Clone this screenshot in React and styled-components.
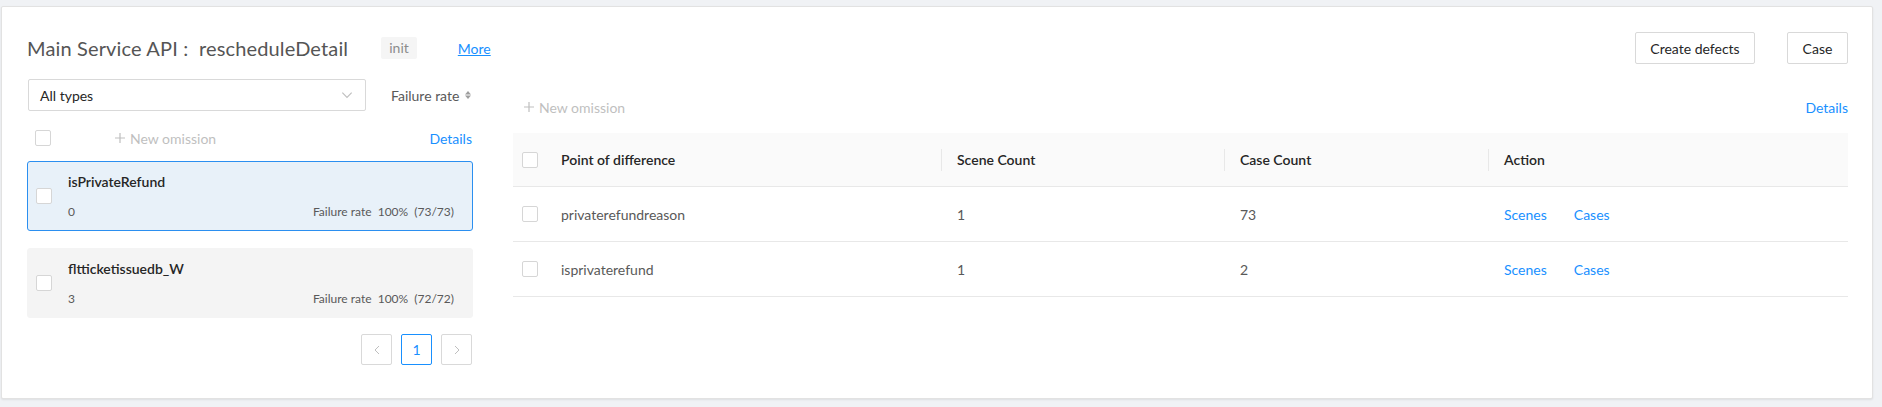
import React from 'react';
import styled, { createGlobalStyle } from 'styled-components';

const GlobalStyle = createGlobalStyle`
  html, body {
    margin: 0;
    padding: 0;
    background: #f0f2f5;
  }
  body {
    font-family: Lato, "Noto Sans", "Noto Sans CJK SC", sans-serif;
    font-size: 14px;
    color: #262626;
  }
`;

const Page = styled.div`
  padding: 6px 9px 8px 1px;
`;

const Card = styled.div`
  box-sizing: border-box;
  height: 393px;
  background: #fff;
  border: 1px solid #e2e2e2;
  border-radius: 2px;
  box-shadow: 0 1px 2px rgba(0, 0, 0, 0.08);
  padding: 25px 24px 0 25px;
`;

const Header = styled.div`
  display: flex;
  align-items: center;
  justify-content: space-between;
  height: 32px;
`;

const TitleGroup = styled.div`
  display: flex;
  align-items: center;
`;

const Title = styled.h1`
  margin: 0;
  font-size: 20px;
  letter-spacing: 0.15px;
  font-weight: 400;
  color: #555;
  white-space: pre;
`;

const Tag = styled.span`
  margin-left: 33px;
  padding: 0 8px;
  height: 22px;
  line-height: 22px;
  background: #f5f5f5;
  border-radius: 2px;
  color: #8c8c8c;
  font-size: 14px;
`;

const MoreLink = styled.a`
  margin-left: 41px;
  color: #1890ff;
  text-decoration: underline;
  font-size: 14px;
  cursor: pointer;
`;

const ButtonGroup = styled.div`
  display: flex;
  gap: 32px;
`;

const Button = styled.button`
  box-sizing: border-box;
  height: 32px;
  width: ${p => p.$width}px;
  background: #fff;
  border: 1px solid #d9d9d9;
  border-radius: 2px;
  font-family: inherit;
  font-size: 14px;
  color: #262626;
  cursor: pointer;
`;

const Body = styled.div`
  display: flex;
  gap: 40px;
  margin-top: 15px;
`;

const LeftCol = styled.div`
  width: 446px;
  flex-shrink: 0;
`;

const FilterRow = styled.div`
  display: flex;
  align-items: center;
  height: 32px;
`;

const Select = styled.div`
  box-sizing: border-box;
  width: 338px;
  height: 32px;
  margin-left: 1px;
  display: flex;
  align-items: center;
  justify-content: space-between;
  padding: 0 11px;
  border: 1px solid #d9d9d9;
  border-radius: 2px;
  color: #262626;
`;

const SortLabel = styled.div`
  margin-left: 25px;
  display: flex;
  align-items: center;
  gap: 5px;
  color: #595959;
`;

const ActionRow = styled.div`
  display: flex;
  align-items: center;
  height: 22px;
  margin-top: 16px;
  padding-left: 8px;
  padding-right: 1px;
`;

const Checkbox = styled.span`
  box-sizing: border-box;
  display: inline-block;
  flex-shrink: 0;
  width: 16px;
  height: 16px;
  background: #fff;
  border: 1px solid #d6d6d6;
  border-radius: 2px;
`;

const AddLink = styled.span`
  margin-left: ${p => p.$offset}px;
  display: flex;
  align-items: center;
  gap: 4px;
  color: #bfbfbf;
`;

const LinkText = styled.a`
  color: #1890ff;
  cursor: pointer;
  margin-left: ${p => (p.$push ? 'auto' : '0')};
  margin-right: ${p => p.$gap || 0}px;
`;

const ItemList = styled.div`
  display: flex;
  flex-direction: column;
  gap: 17px;
  margin-top: 12px;
`;

const Item = styled.div`
  box-sizing: border-box;
  height: 70px;
  display: flex;
  align-items: center;
  padding: 0 18px 0 8px;
  border: 1px solid ${p => (p.$active ? '#2b8ff0' : '#f4f4f4')};
  border-radius: 3px;
  background: ${p => (p.$active ? '#e8f1f9' : '#f4f4f4')};
`;

const ItemBody = styled.div`
  flex: 1;
  margin-left: 16px;
  display: flex;
  flex-direction: column;
  padding-top: 2px;
`;

const ItemTitle = styled.div`
  font-size: 14px;
  line-height: 20px;
  font-weight: 600;
  color: #262626;
`;

const ItemMeta = styled.div`
  display: flex;
  justify-content: space-between;
  margin-top: 10px;
  font-size: 12px;
  line-height: 20px;
  color: #595959;
  white-space: pre;
`;

const Pager = styled.div`
  display: flex;
  justify-content: flex-end;
  gap: 9px;
  margin-top: 16px;
  padding-right: 1px;
`;

const PageBtn = styled.span`
  box-sizing: border-box;
  width: 31px;
  height: 31px;
  display: flex;
  align-items: center;
  justify-content: center;
  border: 1px solid ${p => (p.$active ? '#1890ff' : '#d9d9d9')};
  border-radius: 2px;
  color: ${p => (p.$active ? '#1890ff' : '#bfbfbf')};
  font-size: 14px;
`;

const RightCol = styled.div`
  flex: 1;
  padding-top: 17px;
`;

const Toolbar = styled.div`
  display: flex;
  align-items: center;
  height: 22px;
`;

const Table = styled.div`
  margin-top: 15px;
`;

const Row = styled.div`
  display: grid;
  grid-template-columns: 428px 283px 264px 1fr;
  height: ${p => (p.$head ? 54 : 55)}px;
  background: ${p => (p.$head ? '#fafafa' : '#fff')};
  border-bottom: 1px solid #e8e8e8;
  box-sizing: border-box;
  color: ${p => (p.$head ? '#262626' : '#595959')};
  font-weight: ${p => (p.$head ? 600 : 400)};
`;

const Cell = styled.div`
  position: relative;
  display: flex;
  align-items: center;
  padding-left: ${p => p.$pad ?? 16}px;

  ${p =>
    p.$divider &&
    `
    &::before {
      content: '';
      position: absolute;
      left: 0;
      top: 50%;
      width: 1px;
      height: 22px;
      margin-top: -11px;
      background: #e8e8e8;
    }
  `}
`;

const CellText = styled.span`
  margin-left: ${p => p.$offset || 0}px;
`;

const Chevron = ({ dir, size = 12, color = '#bfbfbf' }) => {
  const paths = {
    down: 'M2 4 L6 8 L10 4',
    left: 'M8 2 L4 6 L8 10',
    right: 'M4 2 L8 6 L4 10',
  };
  return (
    <svg width={size} height={size} viewBox="0 0 12 12" fill="none">
      <path d={paths[dir]} stroke={color} strokeWidth="1" />
    </svg>
  );
};

const SortIcon = () => (
  <svg width="8" height="10" viewBox="0 0 8 10">
    <path d="M4 1 L7 4.5 L1 4.5 Z" fill="#9e9e9e" />
    <path d="M4 9 L7 5.5 L1 5.5 Z" fill="#9e9e9e" />
  </svg>
);

const Plus = () => (
  <svg width="12" height="12" viewBox="0 0 12 12">
    <path d="M6 1 V11 M1 6 H11" stroke="#bfbfbf" strokeWidth="1.2" />
  </svg>
);

const items = [
  { name: 'isPrivateRefund', count: 0, rate: '100%', ratio: '73/73', active: true },
  { name: 'fltticketissuedb_W', count: 3, rate: '100%', ratio: '72/72' },
];

const rows = [
  { point: 'privaterefundreason', scenes: 1, cases: 73 },
  { point: 'isprivaterefund', scenes: 1, cases: 2 },
];

export default function App() {
  return (
    <Page>
      <GlobalStyle />
      <Card>
        <Header>
          <TitleGroup>
            <Title>Main Service API :  rescheduleDetail</Title>
            <Tag>init</Tag>
            <MoreLink>More</MoreLink>
          </TitleGroup>
          <ButtonGroup>
            <Button $width={120}>Create defects</Button>
            <Button $width={61}>Case</Button>
          </ButtonGroup>
        </Header>

        <Body>
          <LeftCol>
            <FilterRow>
              <Select>
                All types
                <Chevron dir="down" size={14} />
              </Select>
              <SortLabel>
                Failure rate
                <SortIcon />
              </SortLabel>
            </FilterRow>

            <ActionRow>
              <Checkbox />
              <AddLink $offset={63}>
                <Plus />
                New omission
              </AddLink>
              <LinkText $push>Details</LinkText>
            </ActionRow>

            <ItemList>
              {items.map(item => (
                <Item key={item.name} $active={item.active}>
                  <Checkbox />
                  <ItemBody>
                    <ItemTitle>{item.name}</ItemTitle>
                    <ItemMeta>
                      <span>{item.count}</span>
                      <span>{`Failure rate  ${item.rate}  (${item.ratio})`}</span>
                    </ItemMeta>
                  </ItemBody>
                </Item>
              ))}
            </ItemList>

            <Pager>
              <PageBtn>
                <Chevron dir="left" />
              </PageBtn>
              <PageBtn $active>1</PageBtn>
              <PageBtn>
                <Chevron dir="right" />
              </PageBtn>
            </Pager>
          </LeftCol>

          <RightCol>
            <Toolbar>
              <AddLink $offset={10}>
                <Plus />
                New omission
              </AddLink>
              <LinkText $push>Details</LinkText>
            </Toolbar>

            <Table>
              <Row $head>
                <Cell $pad={9}>
                  <Checkbox />
                  <CellText $offset={23}>Point of difference</CellText>
                </Cell>
                <Cell $divider>Scene Count</Cell>
                <Cell $divider>Case Count</Cell>
                <Cell $divider>Action</Cell>
              </Row>
              {rows.map(row => (
                <Row key={row.point}>
                  <Cell $pad={9}>
                    <Checkbox />
                    <CellText $offset={23}>{row.point}</CellText>
                  </Cell>
                  <Cell>{row.scenes}</Cell>
                  <Cell>{row.cases}</Cell>
                  <Cell>
                    <LinkText $gap={27}>Scenes</LinkText>
                    <LinkText>Cases</LinkText>
                  </Cell>
                </Row>
              ))}
            </Table>
          </RightCol>
        </Body>
      </Card>
    </Page>
  );
}
